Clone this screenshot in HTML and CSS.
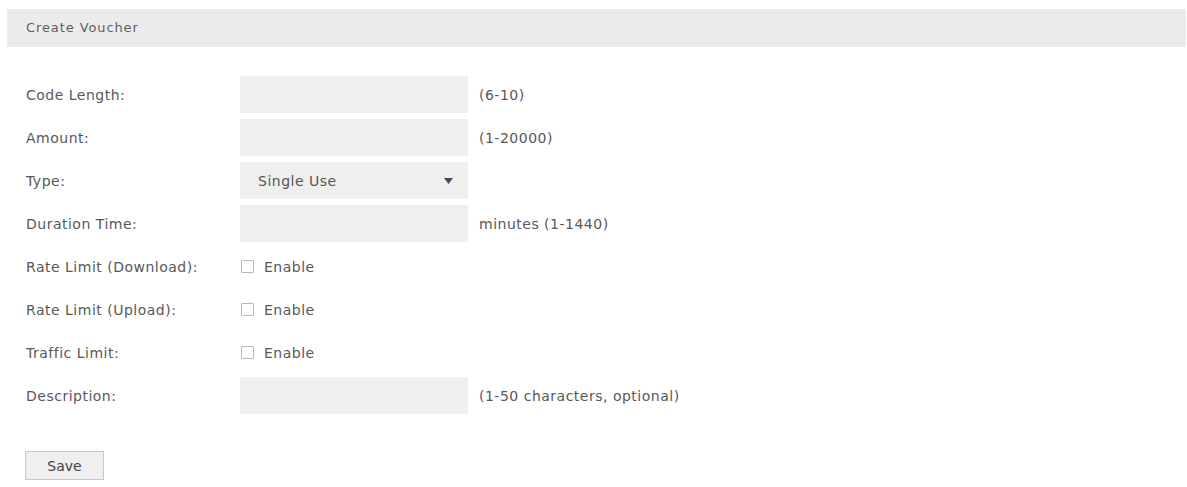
FILE: index.html
```html
<!DOCTYPE html>
<html lang="en">
<head>
<meta charset="utf-8">
<title>Create Voucher</title>
<link rel="stylesheet" href="styles.css">
</head>
<body>
<div class="panel">
  <div class="panel-head">Create Voucher</div>
  <form class="form">
    <div class="row">
      <label class="label">Code Length:</label>
      <input class="field" type="text">
      <span class="hint">(6-10)</span>
    </div>
    <div class="row">
      <label class="label">Amount:</label>
      <input class="field" type="text">
      <span class="hint">(1-20000)</span>
    </div>
    <div class="row">
      <label class="label">Type:</label>
      <div class="field select">
        <span>Single Use</span>
        <svg class="caret" width="9" height="6" viewBox="0 0 9 6"><path d="M0 0H9L4.5 6Z" fill="#3b4f63"/></svg>
      </div>
    </div>
    <div class="row">
      <label class="label">Duration Time:</label>
      <input class="field" type="text">
      <span class="hint">minutes (1-1440)</span>
    </div>
    <div class="row">
      <label class="label">Rate Limit (Download):</label>
      <span class="check"><span class="box"></span>Enable</span>
    </div>
    <div class="row">
      <label class="label">Rate Limit (Upload):</label>
      <span class="check"><span class="box"></span>Enable</span>
    </div>
    <div class="row">
      <label class="label">Traffic Limit:</label>
      <span class="check"><span class="box"></span>Enable</span>
    </div>
    <div class="row">
      <label class="label">Description:</label>
      <input class="field" type="text">
      <span class="hint">(1-50 characters, optional)</span>
    </div>
    <div class="actions">
      <button class="btn" type="button">Save</button>
    </div>
  </form>
</div>
</body>
</html>
```
FILE: styles.css
```css
html, body {
  margin: 0;
  padding: 0;
  background: #ffffff;
}

body {
  font-family: "DejaVu Sans", Verdana, sans-serif;
  font-size: 14px;
  letter-spacing: 0.5px;
  color: #585858;
}

.panel {
  padding: 9px 1px 0 7px;
}

.panel-head {
  height: 38px;
  line-height: 38px;
  background: #ebebeb;
  padding-left: 19px;
  font-size: 13px;
  letter-spacing: 0.9px;
  color: #5e5e5e;
}

.form {
  display: flex;
  flex-direction: column;
  gap: 6px;
  padding: 29px 0 0 19px;
}

.row {
  display: flex;
  align-items: center;
  height: 37px;
}

.label {
  width: 214px;
  flex: none;
}

.field {
  box-sizing: border-box;
  width: 228px;
  height: 37px;
  border: 0;
  margin: 0;
  background: #f0efef;
  font: inherit;
}

.hint {
  margin-left: 11px;
}

.select {
  display: flex;
  align-items: center;
  justify-content: space-between;
  padding: 0 15px 0 18px;
  color: #555555;
}

.caret {
  display: block;
}

.check {
  display: flex;
  align-items: center;
  gap: 10px;
  margin-left: 1px;
}

.box {
  box-sizing: border-box;
  width: 13px;
  height: 13px;
  border: 1px solid #b8b8b8;
  border-radius: 1px;
  background: #ffffff;
}

.actions {
  padding-top: 31px;
}

.btn {
  box-sizing: border-box;
  width: 79px;
  height: 29px;
  margin-left: -1px;
  background: #efefef;
  border: 1px solid #c9c9c9;
  font: inherit;
  color: #444444;
}
```
